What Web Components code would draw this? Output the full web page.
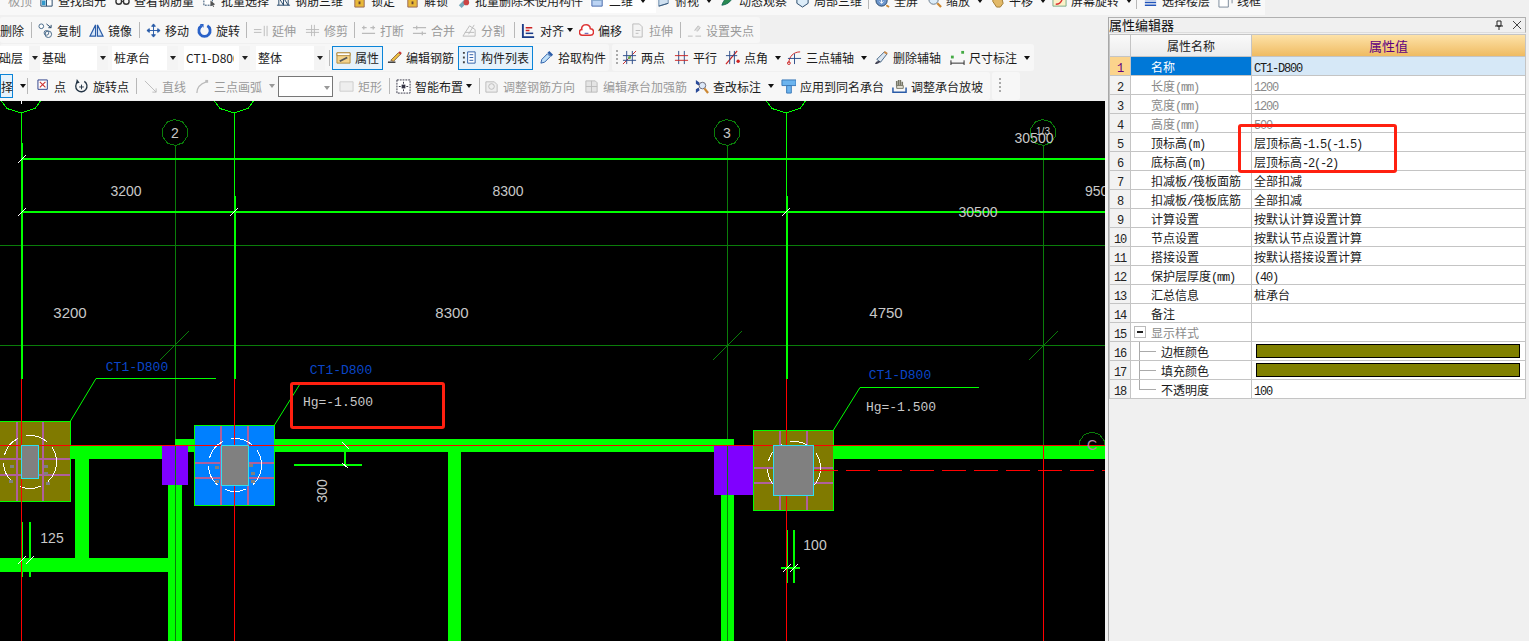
<!doctype html>
<html lang="zh">
<head>
<meta charset="utf-8">
<title>属性编辑器</title>
<style>
  html, body { margin: 0; height: 100%; overflow: hidden; background: #f0f0f0; }
  body { font: 12px "Noto Sans CJK SC", "Liberation Sans", sans-serif; color: #222; }
</style>
</head>
<body>
<cad-app></cad-app>
<script>
const html = (strings, ...values) => String.raw({ raw: strings }, ...values);

// small toolbar glyphs, drawn on a 16x16 box
const ICONS = {
  none: '',
  find: '<path d="M2 3h12v11H2z" fill="#fff" stroke="#246"/><path d="M2 7h12M8 3v11" stroke="#246"/><path d="M3 8h4v5H3z" fill="#39c"/>',
  glasses: '<circle cx="4" cy="9" r="3" fill="none" stroke="#333" stroke-width="1.5"/><circle cx="12" cy="9" r="3" fill="none" stroke="#333" stroke-width="1.5"/><path d="M7 9h2" stroke="#333"/>',
  select: '<path d="M2 4h9v9H2z" fill="#fff" stroke="#246" stroke-dasharray="2 1"/><path d="M9 8l5 4-2 1 1 2-1 0-1-2-2 1z" fill="#555"/>',
  bar3d: '<path d="M1 5h14M1 13h14M3 5v8M8 5v8M13 5v8M3 5l5 8M8 5l5 8" stroke="#246" fill="none"/>',
  lock: '<path d="M3 6h10v9H3z" fill="#e8b838" stroke="#965"/><path d="M7 9h2v3H7z" fill="#643"/>',
  purge: '<path d="M3 13l8-8 3 3-8 8z" fill="#7ab"/><circle cx="11" cy="10" r="3" fill="#c44"/>',
  plane: '<path d="M2 2h11v12H2z" fill="#bcd4f4" stroke="#46a"/><path d="M2 8h11" stroke="#8ac"/>',
  top: '<path d="M3 3l10-2v10l-10 3z" fill="#cfe0f0" stroke="#68a"/><path d="M3 14l10-3" stroke="#357"/>',
  orbit: '<path d="M2 13c2-6 6-10 12-11-1 6-5 10-12 11z" fill="#2a8a50" stroke="#165"/>',
  box3d: '<path d="M2 6l6-4 6 4-6 4z" fill="#bcd8f0" stroke="#246"/><path d="M2 6v5l6 4 6-4V6" fill="#dcecf8" stroke="#246"/>',
  full: '<circle cx="7" cy="8" r="6" fill="#6d96cc" stroke="#246"/><path d="M7 4v7M5 9l2 2 2-2" stroke="#fff" fill="none"/><path d="M12 13l3 2" stroke="#c83" stroke-width="2"/>',
  zoom: '<circle cx="7" cy="7" r="5" fill="#dcecf8" stroke="#678"/><path d="M11 11l4 4" stroke="#c83" stroke-width="2.4"/>',
  hand: '<path d="M3 3l5 1 5 3 1 4-3 4H7L3 9z" fill="#e2b968" stroke="#a07a30"/>',
  screen: '<path d="M1 2h14v12H1z" fill="#fbf2c8" stroke="#7a8"/><path d="M4 12c3 0 6-2 7-6" stroke="#d33" stroke-width="1.5" fill="none"/><path d="M2 3h12v2H2z" fill="#49c"/>',
  floors: '<path d="M2 4h12M2 7h12M2 10h12M2 13h12" stroke="#25b" stroke-width="1.6"/>',
  wire: '<path d="M1 4h10v11H1z" fill="#fff" stroke="#789"/><path d="M5 1h10v10" fill="none" stroke="#789"/><path d="M1 4l4-3M11 4l4-3" stroke="#789"/>',
  copy: '<circle cx="3.5" cy="3.5" r="2.5" fill="#fff" stroke="#468"/><circle cx="11" cy="12" r="3.5" fill="none" stroke="#468"/><circle cx="9" cy="10.5" r="2.5" fill="none" stroke="#468"/><path d="M9 1l5 4M14 2v3h-3" fill="none" stroke="#246"/>',
  mirror: '<path d="M7 2v12H1zM9 2v12h6z" fill="#d6e6f8" stroke="#2a5ca8" stroke-width="1.2"/>',
  move: '<path d="M8 1v14M1 8h14M8 1L6 3.5h4zM8 15l-2-2.5h4zM1 8l2.5-2v4zM15 8l-2.5-2v4z" fill="#2a5ca8" stroke="#2a5ca8"/>',
  rotate: '<path d="M5 3a6 6 0 1 0 6 0" fill="none" stroke="#2a62c8" stroke-width="3"/><path d="M3 1h4v4z" fill="#2a62c8"/>',
  extend: '<path d="M1 7h8M1 10h8M12 3v11M15 3v11" stroke="#bbb" fill="none"/>',
  trim: '<path d="M1 7h14M1 10h14M7 2v12M10 2v12" stroke="#bbb" fill="none"/>',
  breakl: '<path d="M1 5h5M10 5h5M1 11h14M3 3v4M13 3v4" stroke="#bbb" fill="none" stroke-width="1.4"/>',
  merge: '<path d="M1 5h14M1 11h14M5 3v4M11 9v4" stroke="#bbb" fill="none" stroke-width="1.4"/>',
  split: '<path d="M1 14h13V7L8 3 1 14zM3 10h10M13 2L7 12" stroke="#bbb" fill="none"/>',
  align: '<path d="M2 1v14h12" fill="none" stroke="#1c3c88" stroke-width="2"/><path d="M5 5h7M5 8h4" stroke="#c22" stroke-width="1.6"/><path d="M5 11h8" stroke="#1c3c88" stroke-width="1.6"/>',
  offset: '<path d="M4 13a3 3 0 0 1-1-6 4 4 0 0 1 4-5 4 4 0 0 1 5 4 3 3 0 0 1 0 7z" fill="#fff" stroke="#d33" stroke-width="1.6"/><path d="M6 11h4" stroke="#44a"/>',
  stretch: '<path d="M3 1h7l3 3v11H3z" fill="#f4f4f4" stroke="#bbb"/><path d="M6 8h5M6 11h3" stroke="#bbb"/>',
  grippt: '<path d="M1 14h5M9 14h6M11 9l3-4-2-2-4 5" fill="#ddd" stroke="#bbb"/>',
  attr: '<path d="M1 3h14v11H1z" fill="#f4d48c" stroke="#b08a3c"/><path d="M1 3h14v3H1z" fill="#fff" stroke="#b08a3c"/><path d="M4 12l8-4" stroke="#555" stroke-width="2"/>',
  pencil: '<path d="M1 13h8" stroke="#222" stroke-width="1.4"/><path d="M4 11l8-8 3 1-8 8z" fill="#f0c040" stroke="#864"/><path d="M13 2l2 2" stroke="#c33" stroke-width="2"/>',
  list: '<path d="M6 2h8v12H6z" fill="#fff" stroke="#2a5ca8"/><path d="M8 5h4M8 8h4M8 11h4" stroke="#2a5ca8"/><path d="M1 3h2M1 8h2M1 13h2" stroke="#444" stroke-width="2" stroke-dasharray="2 1"/>',
  picker: '<path d="M2 14l1-4 6-6 3 3-6 6z" fill="#bfe0f8" stroke="#2a5ca8"/><path d="M9 3l2-2 4 4-2 2z" fill="#2a5ca8"/>',
  twop: '<path d="M1 15L15 1" stroke="#c22"/><path d="M5 1v14M11 1v14M1 6h14M1 11h14" stroke="#2a4a88" fill="none"/><circle cx="8" cy="8" r="1.6" fill="#6a4"/>',
  para: '<path d="M5 1v14M11 1v14" stroke="#2a4a88"/><path d="M1 6h14M1 11h14" stroke="#c22"/>',
  angle: '<path d="M1 15L13 1" stroke="#c22" stroke-width="1.3"/><path d="M5 1v14M10 1v14M1 6h12" stroke="#2a4a88"/><circle cx="14" cy="12" r="1.8" fill="#c22"/>',
  arc: '<path d="M2 14c0-7 5-12 12-12" fill="none" stroke="#c22"/><path d="M1 9h14M8 4v11" stroke="#2a4a88"/><circle cx="2" cy="14" r="1.5" fill="none" stroke="#c22"/>',
  brush: '<path d="M3 10l8-8 3 2-7 9z" fill="#dde6f0" stroke="#468"/><path d="M1 15c1-3 3-4 6-3-1 2-3 3-6 3z" fill="#445"/><path d="M11 2l3 2" stroke="#c84" stroke-width="2"/>',
  dim: '<path d="M1 14h14M1 11v6M15 11v6" stroke="#222" fill="none"/><rect x="1" y="6" width="3" height="3" fill="#4a4"/><rect x="12" y="1" width="3" height="3" fill="#4a4"/>',
  pt: '<path d="M1 1h10v10H1z" fill="#fff" stroke="#2a3c88"/><path d="M3 3l6 6M9 3l-6 6" stroke="#c33" stroke-width="1.2"/>',
  rotpt: '<path d="M4 3a6 6 0 1 0 7-.5" fill="none" stroke="#234" stroke-width="1.4"/><path d="M3 0l3 4-4 1z" fill="#234"/><path d="M8 6v5M5.5 8.5h5" stroke="#234"/>',
  line: '<path d="M2 2l12 12M14 14v-4M14 14h-4" stroke="#bbb" fill="none"/>',
  arc2: '<path d="M2 15c0-6 4-10 10-12" fill="none" stroke="#bbb" stroke-width="1.4"/><rect x="11" y="1" width="3" height="3" fill="#bbb"/>',
  rect: '<path d="M1 3h14v10H1z" fill="#eee" stroke="#ccc"/>',
  smart: '<path d="M1 1h14v14H1z" fill="#fff" stroke="#334" stroke-dasharray="2 1"/><path d="M8 3v10M3 8h10" stroke="#334" stroke-dasharray="2 2"/><rect x="6" y="6" width="4" height="4" fill="#334"/>',
  rebar: '<path d="M2 3h9l3 3v8H2z" fill="#eee" stroke="#bbb"/><circle cx="8" cy="8" r="3" fill="none" stroke="#bbb"/>',
  cap: '<path d="M2 2h10l2 2v10H2z" fill="#e4e4e4" stroke="#bbb"/><path d="M8 2v12M2 8h12" stroke="#bbb"/>',
  check: '<path d="M2 1l4 3-1 3-3-2zM2 15l4-3-1-3-3 2z" fill="#2a4a98"/><circle cx="9" cy="7" r="3.5" fill="#dce8f8" stroke="#667"/><path d="M11 10l4 5" stroke="#c83" stroke-width="2.4"/>',
  apply: '<path d="M1 1h15v6H1z" fill="#6cb4ee" stroke="#3a78b8"/><path d="M6 7h5v8H6z" fill="#6cb4ee" stroke="#3a78b8"/>',
  slope: '<path d="M5 8V2M7 8V1M9 8V1M11 9V3" stroke="#776" stroke-width="1.6"/><path d="M5 10h7v-3H5z" fill="#e8e4d8" stroke="#776"/><path d="M1 9v5h14V9" fill="none" stroke="#2a5ca8" stroke-width="1.6"/>'
};

// [label, icon, width of the whole item, options]
const ROWS = {
  r0: [
    ['极顶', 'none', 39, { gray: 1, nogap: 1, lead: 1 }], ['查找图元', 'find', 76], ['查看钢筋量', 'glasses', 87], ['批量选择', 'select', 74], ['钢筋三维', 'bar3d', 76],
    ['锁定', 'lock', 53], ['解锁', 'lock', 51], ['批量删除未使用构件', 'purge', 134],
    ['二维', 'plane', 66, { arrow: 1, white: 1 }], ['俯视', 'top', 64, { arrow: 1 }], ['动态观察', 'orbit', 75], ['局部三维', 'box3d', 67], ['|'],
    ['全屏', 'full', 52], ['缩放', 'zoom', 63, { arrow: 1 }], ['平移', 'hand', 62, { arrow: 1 }], ['屏幕旋转', 'screen', 78, { arrow: 1 }], ['|'],
    ['选择楼层', 'floors', 75], ['线框', 'wire', 47]
  ],
  r1: [
    ['删除', 'none', 25, { nogap: 1 }], ['|'], ['复制', 'copy', 51], ['镜像', 'mirror', 44], ['|'], ['移动', 'move', 51], ['旋转', 'rotate', 43], ['|'],
    ['延伸', 'extend', 52, { gray: 1 }], ['修剪', 'trim', 43, { gray: 1 }], ['|'], ['打断', 'breakl', 51, { gray: 1 }], ['合并', 'merge', 50, { gray: 1 }], ['分割', 'split', 46, { gray: 1 }], ['|'],
    ['对齐', 'align', 58, { arrow: 1, tight: 1 }], ['偏移', 'offset', 51], ['拉伸', 'stretch', 44, { gray: 1 }], ['|'], ['设置夹点', 'grippt', 71, { gray: 1 }]
  ],
  r2b: [
    ['两点', 'twop', 52], ['平行', 'para', 51], ['点角', 'angle', 62, { arrow: 1 }], ['三点辅轴', 'arc', 87, { arrow: 1 }], ['删除辅轴', 'brush', 76], ['尺寸标注', 'dim', 80, { arrow: 1 }]
  ]
};

class ToolItem extends HTMLElement {
  connectedCallback() {
    const label = this.getAttribute('label') || '';
    const icon = this.getAttribute('icon');
    const has = (n) => this.hasAttribute(n);
    const gap = has('wide') ? 2 : 4;
    this.attachShadow({ mode: 'open' }).innerHTML = html`
      <style>
        :host { display: flex; align-items: center; flex: none; height: 100%; box-sizing: border-box; white-space: nowrap;
          color: ${has('gray') ? '#9a9a9a' : '#1c1c1c'}; }
        :host([on]) { border: 1px solid #0a84d8; background: #e6f2fb; }
        :host([white]) { background: #fff; box-shadow: 0 5px 0 #fff; }
        :host([lead]) { padding-left: 8px; }
        svg { width: 15px; height: 15px; flex: none; margin-right: ${gap}px; }
        i { margin-left: ${has('tight') ? 3 : 7}px; width: 0; height: 0; border: 3px solid transparent; border-top: 4px solid ${has('gray') ? '#999' : '#111'}; border-bottom: 0; }
      </style>
      ${icon && icon !== 'none' ? `<svg viewBox="0 0 16 16">${ICONS[icon]}</svg>` : ''}
      <span>${label}</span>${has('arrow') ? '<i></i>' : ''}`;
  }
}

class ToolSep extends HTMLElement {
  constructor() {
    super();
    this.attachShadow({ mode: 'open' }).innerHTML = html`
      <style>:host { display: block; flex: none; width: 1px; height: 16px; margin: 0 6px; background: #b8b8b8; }</style>`;
  }
}

class ToolGrip extends HTMLElement {
  constructor() {
    super();
    this.attachShadow({ mode: 'open' }).innerHTML = html`
      <style>:host { display: block; flex: none; width: 2px; height: 16px; margin: 0 4px 0 3px;
        background: repeating-linear-gradient(#aaa 0 2px, transparent 2px 4px); }</style>`;
  }
}

class ComboBox extends HTMLElement {
  connectedCallback() {
    this.attachShadow({ mode: 'open' }).innerHTML = html`
      <style>
        :host { display: flex; align-items: center; flex: none; height: 24px; background: #fff; box-sizing: border-box;
          padding-left: 2px; overflow: hidden; white-space: nowrap; width: ${this.getAttribute('w')}px; position: relative; }
        :host([framed]) { border: 1px solid #777; }
        span { display: block; overflow: hidden; max-width: calc(100% - 16px); }
        b { position: absolute; right: 0; top: 0; bottom: 0; width: 11px; background: #f4f4f4; }
        b::after { content: ""; position: absolute; left: 3px; top: 10px; border: 3px solid transparent; border-top: 4px solid #222; border-bottom: 0; }
        :host([framed]) b { background: #fff; }
        :host([framed]) b::after { border-top-color: #999; top: 9px; }
      </style>
      <span>${this.getAttribute('text') || ''}</span><b></b>`;
  }
}

// one floating toolbar strip, filled from ROWS
class ToolBar extends HTMLElement {
  connectedCallback() {
    const items = (ROWS[this.getAttribute('items')] || []).map(([label, icon, w, o = {}]) => {
      if (label === '|') return '<tool-sep></tool-sep>';
      const flags = Object.keys(o).join(' ');
      return `<tool-item label="${label}" icon="${icon}" ${flags} style="width:${w}px"></tool-item>`;
    }).join('');
    this.attachShadow({ mode: 'open' }).innerHTML = html`
      <style>
        :host { display: flex; align-items: center; flex: none; box-sizing: border-box; height: 100%;
          background: #f7f7f7; border-radius: 3px; }
        :host([cut]) tool-item, :host([cut]) tool-sep { position: relative; top: -7px; }
      </style>
      <slot name="before"></slot>${items}<slot></slot>`;
  }
}

// SimSun style half width latin beside the 12px CJK glyphs
const ascii = (text) => text.replace(/[\x21-\x7e]+/g, (m) => `<span class="a">${m}</span>`);

class PropRow extends HTMLElement {
  connectedCallback() {
    const a = (n) => this.getAttribute(n) || '';
    const swatch = this.hasAttribute('swatch');
    this.attachShadow({ mode: 'open' }).innerHTML = html`
      <style>
        :host { display: grid; grid-template-columns: 21px 121px 1fr; height: 19px; background: #fff; box-sizing: border-box;
          border-bottom: 1px solid #c4c4c4; line-height: 20px; white-space: nowrap; color: #1a1a1a; }
        div { border-right: 1px solid #c4c4c4; min-width: 0; height: 18px; overflow: hidden; }
        .n { background: #f2f2f2; text-align: center; color: #222; }
        .k { padding-left: ${this.hasAttribute('child') ? 30 : 20}px; position: relative; }
        .v { padding-left: 2px; border-right: 0; }
        .a { font: 12px "Liberation Mono", monospace; letter-spacing: -1.2px; }
        :host([muted]) .k, :host([dim]) .v { color: #8a8a8a; }
        :host([sel]) .n { background: #fbd48c; color: #600080; }
        :host([sel]) .k { background: #0078d7; color: #fff; }
        :host([sel]) .v { background: #d6e8f7; }
        .s { display: block; height: 12px; margin: 2px 5px 0 2px; background: #808000; border: 1px solid #000; }
      </style>
      <div class="n"><span class="a">${a('n')}</span></div>
      <div class="k"><slot name="tree"></slot>${ascii(a('name'))}</div>
      <div class="v">${swatch ? '<span class="s"></span>' : ascii(a('value'))}</div>`;
  }
}

class TreeMark extends HTMLElement {
  connectedCallback() {
    const kind = this.getAttribute('kind');
    this.attachShadow({ mode: 'open' }).innerHTML = html`
      <style>
        :host { position: absolute; left: 0; top: 0; width: 30px; height: 19px; display: block; }
        .box { position: absolute; left: 3px; top: 3px; width: 10px; height: 10px; border: 1px solid #bbb; background: #fff; }
        .box::after { content: ""; position: absolute; left: 2px; right: 2px; top: 4px; height: 2px; background: #222; }
        .v { position: absolute; left: 8px; top: 0; width: 1px; height: ${kind === 'end' ? 10 : 19}px; background: #aaa; }
        .h { position: absolute; left: 8px; top: 9px; width: 17px; height: 1px; background: #aaa; }
      </style>
      ${kind === 'box' ? '<span class="box"></span>' : '<span class="v"></span><span class="h"></span>'}`;
  }
}

class PropPanel extends HTMLElement {
  constructor() {
    super();
    this.attachShadow({ mode: 'open' }).innerHTML = html`
      <style>
        :host { display: block; position: relative; box-sizing: border-box; height: 100%; padding: 0 3px; background: #f0f0f0; }
        .frame { height: 100%; border-left: 1px solid #a8a8a8; }
        .title { display: flex; align-items: center; height: 14px; margin-bottom: 1px; border: 1px solid #b0b0b0; border-left: 0; border-bottom-color: #ddd;
          font-size: 13px; line-height: 14px; color: #111; padding-right: 3px; }
        .title span { flex: 1; }
        .title svg { width: 10px; height: 10px; margin-left: 8px; }
        .grid { border: 1px solid #c4c4c4; border-bottom: 0; }
        .head { display: grid; grid-template-columns: 21px 121px 1fr; box-sizing: border-box; height: 22px; line-height: 21px; text-align: center; border-bottom: 1px solid #c4c4c4; }
        .head div { border-right: 1px solid #c4c4c4; background: linear-gradient(#fafafa, #ececec); }
        .head .val { border-right: 0; background: linear-gradient(#fde2a8, #efbb62); color: #600080; font-size: 13px; }
        .mark { position: absolute; left: 133px; top: 107px; width: 159px; height: 49px; box-sizing: border-box; border: 3px solid #ff2010; border-radius: 3px; pointer-events: none; }
      </style>
      <div class="frame">
        <div class="title"><span>属性编辑器</span>
          <svg viewBox="0 0 10 10"><path d="M3 1h4v5H3zM1 6h8M5 6v4" fill="none" stroke="#222"/></svg>
          <svg viewBox="0 0 10 10"><path d="M1 1l8 8M9 1L1 9" stroke="#444"/></svg>
        </div>
        <div class="grid">
          <div class="head"><div></div><div>属性名称</div><div class="val">属性值</div></div>
          <slot></slot>
        </div>
      </div>
      <div class="mark"></div>`;
  }
}

class CadCanvas extends HTMLElement {
  constructor() {
    super();
    const G = '#00ff00', D = '#0a7d0a', R = '#ff0000', P = '#b0609c';
    const poly = (cx, cy, r, s = D) => {
      let pts = '';
      for (let i = 0; i < 10; i++) pts += `${(cx + r * Math.cos(i * Math.PI / 5 + .3)).toFixed(1)},${(cy + r * Math.sin(i * Math.PI / 5 + .3)).toFixed(1)} `;
      return `<polygon points="${pts}" fill="#000" stroke="${s}"/>`;
    };
    const rect = (x0, y0, x1, y1, f) => `<rect x="${x0}" y="${y0}" width="${x1 - x0}" height="${y1 - y0}" fill="${f}"/>`;
    const ln = (x1, y1, x2, y2, s, w = 1) => `<line x1="${x1}" y1="${y1}" x2="${x2}" y2="${y2}" stroke="${s}" stroke-width="${w}"/>`;
    const tick = (x, y, r = 4) => ln(x - r, y + r, x + r, y - r, '#fff');
    const specks = (x0, y0, pts) => pts.map(([x, y]) => rect(x0 + x, y0 + y, x0 + x + 4, y0 + y + 3, '#808080')).join('');
    const cap = (x0, y0, x1, y1, fill, vx, hy, c) => `
      <rect x="${x0}" y="${y0}" width="${x1 - x0}" height="${y1 - y0}" fill="${fill}"/>
      ${vx.map((x) => ln(x, y0, x, y1, P, 2)).join('')}${hy.map((y) => ln(x0, y, x1, y, P, 2)).join('')}
      <rect x="${x0 + .5}" y="${y0 + .5}" width="${x1 - x0 - 1}" height="${y1 - y0 - 1}" fill="none" stroke="${G}"/>
      <circle cx="${c[0]}" cy="${c[1]}" r="26.5" fill="none" stroke="#fff" stroke-dasharray="22 8"/>`;
    const column = ([x0, y0, x1, y1]) => `<rect x="${x0 + .5}" y="${y0 + .5}" width="${x1 - x0 - 1}" height="${y1 - y0 - 1}" fill="#808080" stroke="#2fe0f0"/>`;
    const T = (x, y, s, o = '') => `<text x="${x}" y="${y}" ${o}>${s}</text>`;

    this.attachShadow({ mode: 'open' }).innerHTML = html`
      <style>
        :host { display: block; height: 100%; background: #000; overflow: hidden; }
        svg { display: block; width: 100%; height: 100%; }
        text { font: 14px "Liberation Sans", sans-serif; fill: #c8c8c8; text-anchor: middle; dominant-baseline: central; }
        .big { font-size: 15px; }
        .mono { font: 13px "Liberation Mono", monospace; }
        .blue { fill: #0a46c8; }
      </style>
      <svg viewBox="0 101 1105 540" shape-rendering="crispEdges">
        <!-- axis bubbles and grid -->
        <g>
          ${poly(21, 89, 24, G)}${poly(234, 89, 24, G)}${poly(786, 89, 24, G)}
          ${ln(21.5, 113, 21.5, 145, G)}${ln(234.5, 113, 234.5, 197, G)}${ln(786.5, 113, 786.5, 197, G)}
          ${ln(21.5, 101, 21.5, 104, '#fff')}
          ${ln(0, 245.5, 1105, 245.5, D)}${ln(0, 345.5, 1105, 345.5, D)}
          ${ln(175.5, 146, 175.5, 641, D)}${ln(727.5, 146, 727.5, 641, D)}${ln(1043.5, 146, 1043.5, 446, D)}
          ${ln(22, 143, 22, 379, G, 2)}${ln(235, 196, 235, 379, G, 2)}${ln(787, 196, 787, 379, G, 2)}
          ${ln(22, 159, 1105, 159, G, 2)}${ln(22, 212, 1105, 212, G, 2)}
          ${tick(22, 159)}${tick(22, 212)}${tick(234, 212)}${tick(786, 212)}
          ${ln(160, 360, 189, 331, D)}${ln(713, 360, 742, 331, D)}${ln(1029, 360, 1058, 331, D)}
          ${poly(175, 132.5, 13)}${poly(727, 132.5, 13)}${poly(1043, 132.5, 13)}${poly(1092, 445, 13)}
        </g>

        <!-- walls -->
        ${rect(0, 446, 175, 459, G)}${rect(175, 439, 734, 452, G)}${rect(753, 446, 1105, 459, G)}
        ${rect(75, 459, 89, 558, G)}${rect(0, 558, 168, 572, G)}${rect(168, 485, 182, 641, G)}
        ${rect(448, 452, 461, 641, G)}${rect(721, 495, 734, 641, G)}
        ${rect(162, 446, 188, 485, '#8000ff')}${rect(714, 446, 753, 495, '#8000ff')}
        ${ln(175.5, 446, 175.5, 641, D)}${ln(727.5, 446, 727.5, 641, D)}

        <!-- pile caps -->
        ${cap(-4, 421, 71, 502, '#807a00', [17, 43], [459, 475], [30, 462])}
        ${cap(194, 425, 275, 506, '#0080ff', [221, 248], [463, 478], [235, 465])}
        ${cap(753, 430, 834, 511, '#807a00', [780, 807], [468, 483], [794, 468])}
        ${specks(0, 440, [[10, 25], [9, 40], [44, 25], [44, 32], [46, 42]])}
        ${specks(215, 440, [[0, 26], [0, 40], [34, 24], [36, 32], [36, 40]])}

        <!-- red axes -->
        ${ln(0, 445.5, 1105, 445.5, R)}
        ${ln(21.5, 379, 21.5, 641, R)}${ln(234.5, 379, 234.5, 641, R)}${ln(786.5, 379, 786.5, 641, R)}${ln(1043.5, 445, 1043.5, 641, R)}
        <line x1="814" y1="470.5" x2="1105" y2="470.5" stroke="${R}" stroke-dasharray="24 8"/>
        ${column([21, 445, 39, 479])}${column([221, 445, 249, 486])}${column([773, 445, 814, 496])}

        <!-- leaders -->
        <g shape-rendering="auto">
          <polyline points="70.5,421 96,378.5 216,378.5" fill="none" stroke="${G}"/>
          <polyline points="274.5,425 300,384" fill="none" stroke="${G}"/>
          <polyline points="833.5,430 860,387.5 979,387.5" fill="none" stroke="${G}"/>
        </g>
        ${ln(294, 465, 362, 465, G, 2)}${ln(345, 452, 345, 465, G, 2)}
        ${ln(342, 442, 349, 449, '#fff')}${ln(342, 463, 348, 468, '#fff')}
        ${ln(22.5, 522, 22.5, 577, G)}${ln(30, 522, 30, 577, G, 2)}${tick(22, 560)}${tick(30, 560)}
        ${ln(787.5, 530, 787.5, 583, G)}${ln(794, 530, 794, 583, G, 2)}${ln(781, 568, 800, 568, G, 2)}${tick(787, 568)}${tick(794, 568)}

        <!-- dimension and label text -->
        <g shape-rendering="auto">
          ${T(175, 133, '2')}${T(727, 133, '3')}${T(1043, 131, '1/3', 'style="font-size:10px"')}
          <text x="1092" y="445" style="fill:#b48aa8">C</text>
          ${T(126, 191, '3200')}${T(508, 191, '8300')}${T(1034, 138, '30500')}${T(978, 212, '30500')}
          ${T(1085, 191, '950', 'style="text-anchor:start"')}
          ${T(70, 312, '3200', 'class="big"')}${T(452, 312, '8300', 'class="big"')}${T(886, 312, '4750', 'class="big"')}
          ${T(137, 367, 'CT1-D800', 'class="mono blue"')}${T(341, 370, 'CT1-D800', 'class="mono blue"')}${T(900, 375, 'CT1-D800', 'class="mono blue"')}
          ${T(338, 402, 'Hg=-1.500', 'class="mono"')}${T(901, 407, 'Hg=-1.500', 'class="mono"')}
          ${T(322, 491, '300', 'transform="rotate(-90 322 491)"')}
          ${T(52, 538, '125')}${T(815, 545, '100')}
        </g>
      </svg>
      <slot></slot>`;
  }
}

class CalloutBox extends HTMLElement {
  constructor() {
    super();
    this.attachShadow({ mode: 'open' }).innerHTML = html`
      <style>:host { position: absolute; left: 290px; top: 382px; width: 155px; height: 47px; box-sizing: border-box; border: 3px solid #ff2010; border-radius: 3px; }</style>`;
  }
}

class CadApp extends HTMLElement {
  constructor() {
    super();
    this.attachShadow({ mode: 'open' }).innerHTML = html`
      <style>
        :host { display: grid; grid-template-columns: 1105px 1fr; grid-template-rows: 17px 1fr; width: 1529px; height: 641px; position: relative; overflow: hidden; background: #f0f0f0; }
        .top { grid-column: 1 / 3; overflow: hidden; }
        .top tool-bar { height: 15px; width: 1265px; border-radius: 0; background: #f8f8f8; }
        .left { display: grid; grid-template-rows: 27px 28px 29px 540px; min-width: 0; }
        .band { display: flex; align-items: stretch; padding-bottom: 1px; box-sizing: border-box; overflow: hidden; min-width: 0; }
        .r1 tool-bar { width: 760px; }
        .r2 tool-bar:first-child { width: 609px; }
        .r2 tool-bar:last-child { width: 422px; margin-left: 3px; padding-left: 1px; }
        .r3 tool-bar:first-child { width: 990px; }
        .r3 tool-bar:last-child { width: 28px; margin-left: 2px; padding-left: 4px; }
        .g4 { width: 4px; flex: none; }
        .g6 { width: 6px; flex: none; }
        .clipped { margin-left: -3px; }
        combo-box[framed] { margin-right: 6px; height: 21px; }
      </style>
      <div class="top"><tool-bar items="r0" cut></tool-bar></div>
      <div class="left">
        <div class="band r1"><tool-bar items="r1"></tool-bar></div>
        <div class="band r2">
          <tool-bar>
            <combo-box class="clipped" text="础层" w="43"></combo-box>
            <combo-box text="基础" w="68"></combo-box><span class="g4"></span>
            <combo-box text="桩承台" w="66"></combo-box><span class="g6"></span>
            <combo-box text="CT1-D800" w="66"></combo-box><span class="g6"></span>
            <combo-box text="整体" w="69"></combo-box>
            <tool-sep style="margin:0 2px 0 4px"></tool-sep>
            <tool-item label="属性" icon="attr" on style="width:51px;height:24px;padding-left:3px"></tool-item>
            <tool-item label="编辑钢筋" icon="pencil" style="width:75px;padding-left:4px"></tool-item>
            <tool-item label="构件列表" icon="list" on style="width:75px;height:24px;padding-left:3px;margin-right:6px"></tool-item>
            <tool-item label="拾取构件" icon="picker" style="width:66px"></tool-item>
          </tool-bar>
          <tool-bar items="r2b"><tool-grip slot="before"></tool-grip></tool-bar>
        </div>
        <div class="band r3">
          <tool-bar>
            <tool-item label="择" on nogap style="width:13px;height:24px"></tool-item>
            <tool-item label="" arrow style="width:8px"></tool-item>
            <tool-sep></tool-sep>
            <tool-item label="点" icon="pt" wide style="width:37px;margin-left:3px"></tool-item>
            <tool-item label="旋转点" icon="rotpt" style="width:56px"></tool-item>
            <tool-sep></tool-sep>
            <tool-item label="直线" icon="line" gray style="width:52px"></tool-item>
            <tool-item label="三点画弧" icon="arc2" gray arrow style="width:83px"></tool-item>
            <combo-box framed w="55"></combo-box>
            <tool-item label="矩形" icon="rect" gray style="width:44px"></tool-item>
            <tool-sep></tool-sep>
            <tool-item label="智能布置" icon="smart" arrow tight style="width:77px"></tool-item>
            <tool-sep style="margin-right:4px"></tool-sep>
            <tool-item label="调整钢筋方向" icon="rebar" gray style="width:100px"></tool-item>
            <tool-item label="编辑承台加强筋" icon="cap" gray style="width:110px"></tool-item>
            <tool-item label="查改标注" icon="check" arrow style="width:87px"></tool-item>
            <tool-item label="应用到同名承台" icon="apply" style="width:111px"></tool-item>
            <tool-item label="调整承台放坡" icon="slope" style="width:96px"></tool-item>
          </tool-bar>
          <tool-bar><tool-grip></tool-grip></tool-bar>
        </div>
        <cad-canvas></cad-canvas>
      </div>
      <prop-panel>
        <prop-row n="1" name="名称" value="CT1-D800" sel></prop-row>
        <prop-row n="2" name="长度(mm)" value="1200" muted dim></prop-row>
        <prop-row n="3" name="宽度(mm)" value="1200" muted dim></prop-row>
        <prop-row n="4" name="高度(mm)" value="500" muted dim></prop-row>
        <prop-row n="5" name="顶标高(m)" value="层顶标高-1.5(-1.5)"></prop-row>
        <prop-row n="6" name="底标高(m)" value="层顶标高-2(-2)"></prop-row>
        <prop-row n="7" name="扣减板/筏板面筋" value="全部扣减"></prop-row>
        <prop-row n="8" name="扣减板/筏板底筋" value="全部扣减"></prop-row>
        <prop-row n="9" name="计算设置" value="按默认计算设置计算"></prop-row>
        <prop-row n="10" name="节点设置" value="按默认节点设置计算"></prop-row>
        <prop-row n="11" name="搭接设置" value="按默认搭接设置计算"></prop-row>
        <prop-row n="12" name="保护层厚度(mm)" value="(40)"></prop-row>
        <prop-row n="13" name="汇总信息" value="桩承台"></prop-row>
        <prop-row n="14" name="备注" value=""></prop-row>
        <prop-row n="15" name="显示样式" value="" muted><tree-mark slot="tree" kind="box"></tree-mark></prop-row>
        <prop-row n="16" name="边框颜色" child swatch><tree-mark slot="tree"></tree-mark></prop-row>
        <prop-row n="17" name="填充颜色" child swatch><tree-mark slot="tree"></tree-mark></prop-row>
        <prop-row n="18" name="不透明度" value="100" child><tree-mark slot="tree" kind="end"></tree-mark></prop-row>
      </prop-panel>
      <callout-box></callout-box>`;
  }
}

customElements.define('tool-item', ToolItem);
customElements.define('tool-sep', ToolSep);
customElements.define('tool-grip', ToolGrip);
customElements.define('combo-box', ComboBox);
customElements.define('tool-bar', ToolBar);
customElements.define('tree-mark', TreeMark);
customElements.define('prop-row', PropRow);
customElements.define('prop-panel', PropPanel);
customElements.define('cad-canvas', CadCanvas);
customElements.define('callout-box', CalloutBox);
customElements.define('cad-app', CadApp);
</script>
</body>
</html>
